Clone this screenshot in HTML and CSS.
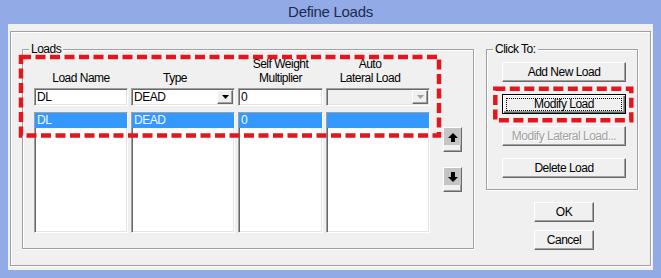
FILE: index.html
```html
<!DOCTYPE html>
<html>
<head>
<meta charset="utf-8">
<title>Define Loads</title>
<link rel="stylesheet" href="styles.css">
</head>
<body>
<div class="window">
  <div class="titlebar">Define Loads</div>
  <div class="client">
    <div class="etched">
      <div class="main">
        <div class="group loads">
          <div class="legend">Loads</div>
          <div class="grid">
            <div class="hdr">Load Name</div>
            <div class="hdr hdr-combo">Type</div>
            <div class="hdr">Self Weight<br>Multiplier</div>
            <div class="hdr hdr-combo">Auto<br>Lateral Load</div>
            <div></div>

            <div class="edit">DL</div>
            <div class="combo">
              <span class="val">DEAD</span>
              <span class="dd"><svg width="7" height="4" viewBox="0 0 7 4"><polygon points="0,0 7,0 3.5,4" fill="#000"/></svg></span>
            </div>
            <div class="edit">0</div>
            <div class="combo disabled">
              <span class="val"></span>
              <span class="dd"><svg width="7" height="4" viewBox="0 0 7 4"><polygon points="0,0 7,0 3.5,4" fill="#a0a0a0"/></svg></span>
            </div>
            <div></div>

            <div class="list"><div class="sel">DL</div></div>
            <div class="list"><div class="sel">DEAD</div></div>
            <div class="list"><div class="sel">0</div></div>
            <div class="list"><div class="sel"></div></div>
            <div class="arrows">
              <div class="abtn">
                <svg width="17" height="17" viewBox="0 0 17 17"><rect width="17" height="17" fill="#c4c4c4"/><polygon points="4,10 9,5 14,10" fill="#000"/><rect x="7" y="10" width="4" height="4" fill="#000"/></svg>
              </div>
              <div class="abtn">
                <svg width="17" height="17" viewBox="0 0 17 17"><rect width="17" height="17" fill="#c4c4c4"/><rect x="7" y="4" width="4" height="5" fill="#000"/><polygon points="4,9 14,9 9,14" fill="#000"/></svg>
              </div>
            </div>
          </div>
        </div>

        <div class="side">
          <div class="group click">
            <div class="legend">Click To:</div>
            <div class="btns">
              <div class="btn">Add New Load</div>
              <div class="btn default"><span class="focus">Modify Load</span></div>
              <div class="btn disabled">Modify Lateral Load...</div>
              <div class="btn">Delete Load</div>
            </div>
          </div>
          <div class="okc">
            <div class="btn">OK</div>
            <div class="btn">Cancel</div>
          </div>
        </div>
      </div>
    </div>
  </div>
</div>
<svg class="annot" width="661" height="278" viewBox="0 0 661 278">
  <rect x="21" y="57" width="418" height="78.5" fill="none" stroke="#e2171d" stroke-width="4.5" stroke-dasharray="10 4.5"/>
  <rect x="495.3" y="88.7" width="136" height="31.6" fill="none" stroke="#e2171d" stroke-width="4.5" stroke-dasharray="10 4.5"/>
</svg>
</body>
</html>
```

FILE: styles.css
```css
* {
  box-sizing: border-box;
  margin: 0;
  padding: 0;
}

html, body {
  width: 661px;
  height: 278px;
  overflow: hidden;
}

body {
  position: relative;
  font-family: "Liberation Sans", Arial, sans-serif;
  font-size: 12px;
  letter-spacing: -0.5px;
  color: #000;
  background: #92abe7;
}

.window {
  width: 661px;
  height: 278px;
  background: #92abe7;
  padding: 0 8px 8px;
  display: flex;
  flex-direction: column;
}

.titlebar {
  height: 24px;
  line-height: 24px;
  text-align: center;
  font-size: 15px;
  letter-spacing: -0.3px;
  color: #1c2a4c;
}

.client {
  flex: 1;
  background: #f0f0f0;
  padding: 7px 2px 4px;
}

.etched {
  height: 100%;
  border: 1px solid #a0a0a0;
  box-shadow: inset 1px 1px 0 #fff, 1px 1px 0 #fff;
  padding: 17px 0 0 11px;
}

.main {
  display: flex;
  align-items: flex-start;
  gap: 12px;
}

.group {
  border: 1px solid #a0a0a0;
  box-shadow: inset 1px 1px 0 #fff, 1px 1px 0 #fff;
  display: flex;
  flex-direction: column;
}

.legend {
  align-self: flex-start;
  margin: -8px 0 0 6px;
  padding: 0 2px;
  height: 14px;
  line-height: 14px;
  background: #f0f0f0;
}

.loads {
  width: 452px;
  height: 200px;
}

.grid {
  display: grid;
  grid-template-columns: 94px 104px 85px 104px 29px;
  column-gap: 3px;
  margin: 1px 0 0 11px;
}

.hdr {
  line-height: 14px;
  text-align: center;
  align-self: end;
  white-space: nowrap;
}

.hdr-combo {
  padding-right: 16px;
}

.edit,
.combo,
.list {
  background: #fff;
  border: 1px solid #a0a0a0;
  border-right-color: #fff;
  border-bottom-color: #fff;
  box-shadow: inset 1px 1px 0 #696969, inset -1px -1px 0 #e3e3e3;
}

.edit {
  height: 18px;
  margin-top: 3px;
  padding-left: 2px;
  line-height: 16px;
}

.combo {
  height: 18px;
  margin-top: 3px;
  display: flex;
}

.combo.disabled {
  background: #f0f0f0;
}

.combo .val {
  flex: 1;
  padding-left: 2px;
  line-height: 16px;
}

.dd {
  width: 16px;
  height: 14px;
  margin: 1px 1px 1px 0;
  background: #f0f0f0;
  border: 1px solid;
  border-color: #fff #696969 #696969 #fff;
  box-shadow: inset -1px -1px 0 #a0a0a0;
  display: flex;
  align-items: center;
  justify-content: center;
}

.dd svg {
  display: block;
}

.list {
  height: 121px;
  margin-top: 6px;
}

.sel {
  height: 15px;
  line-height: 15px;
  padding-left: 2px;
  background: #3399ff;
  color: #f2f9ff;
}

.arrows {
  justify-self: end;
  display: flex;
  flex-direction: column;
  gap: 15px;
  margin-top: 21px;
}

.abtn {
  width: 19px;
  height: 25px;
  background: #f0f0f0;
  border: 1px solid;
  border-color: #fff #696969 #696969 #fff;
  box-shadow: inset -1px -1px 0 #a0a0a0;
}

.abtn svg {
  display: block;
}

.side {
  width: 152px;
  display: flex;
  flex-direction: column;
}

.click {
  height: 141px;
}

.btns {
  width: 124px;
  margin: 6px 0 0 15px;
  display: flex;
  flex-direction: column;
  gap: 12px;
}

.btn {
  height: 20px;
  line-height: 18px;
  text-align: center;
  background: #f0f0f0;
  border: 1px solid;
  border-color: #fff #696969 #696969 #fff;
  box-shadow: inset -1px -1px 0 #a0a0a0;
  white-space: nowrap;
}

.btn.default {
  border-color: #000;
  box-shadow: inset 1px 1px 0 #fff, inset -1px -1px 0 #696969, inset -2px -2px 0 #a0a0a0;
}

.focus {
  display: block;
  margin: 3px 3px 2px 3px;
  height: 13px;
  line-height: 11px;
  border: 1px dotted #000;
}

.btn.disabled {
  color: #a0a0a0;
  text-shadow: 1px 1px 0 #fff;
}

.okc {
  width: 60px;
  margin: 12px 0 0 48px;
  display: flex;
  flex-direction: column;
  gap: 8px;
}

.annot {
  position: absolute;
  left: 0;
  top: 0;
  pointer-events: none;
}
```
